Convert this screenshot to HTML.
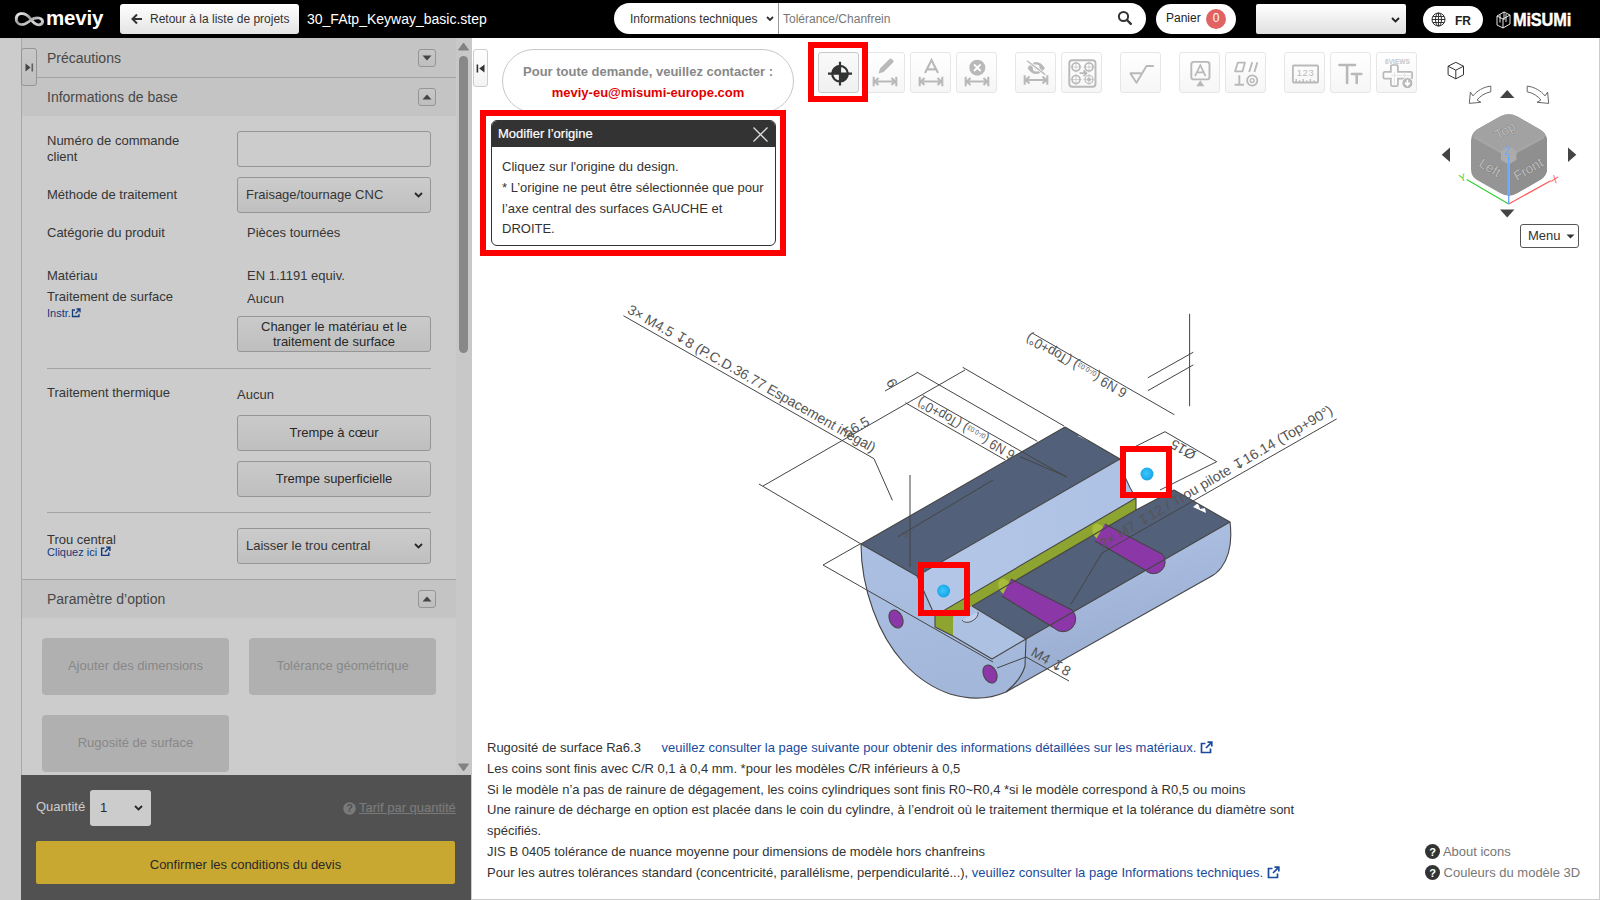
<!DOCTYPE html>
<html><head><meta charset="utf-8">
<style>
*{box-sizing:border-box;margin:0;padding:0}
html,body{width:1600px;height:900px;overflow:hidden;background:#fff;font-family:"Liberation Sans",sans-serif;color:#333}
.a{position:absolute}
#hdr{left:0;top:0;width:1600px;height:38px;background:#000}
.btn-back{left:120px;top:4px;width:179px;height:30px;border-radius:3px;background:linear-gradient(#fff,#e4e4e4);font-size:12px;color:#333}
.pill{background:#fff;border-radius:16px}
/* left panel */
#lp{left:0;top:38px;width:472px;height:862px;background:#fff;overflow:hidden}
.sec{left:21px;width:435px;background:#f5f5f5;border-bottom:1px solid #ccc}
.sec .t{left:26px;font-size:14px;color:#5a5a5a}
.tg{width:18px;height:18px;border:1px solid #bbb;border-radius:3px;background:linear-gradient(#fafafa,#eee)}
.lbl{left:47px;font-size:13px;color:#444;line-height:16px}
.val{font-size:13px;color:#444}
.inp{left:237px;width:194px;border:1px solid #bbb;border-radius:3px;background:#fff}
.sel{left:237px;width:194px;border:1px solid #bbb;border-radius:3px;background:linear-gradient(#fff,#f0f0f0);font-size:13px;color:#444}
.gbtn{left:237px;width:194px;border:1px solid #bbb;border-radius:3px;background:linear-gradient(#fdfdfd,#efefef);font-size:13px;color:#333;text-align:center}
.obtn{width:187px;height:57px;border-radius:4px;background:#ddd;color:#aaa;font-size:13px;text-align:center;line-height:55px}
.hr{left:47px;width:384px;height:1px;background:#ccc}
#ov{left:0;top:38px;width:472px;height:862px;background:rgba(0,0,0,.2)}
.tb{width:41px;height:41px;border:1px solid #e6e6e6;border-radius:3px;background:linear-gradient(#fff,#f6f6f6)}
.tb svg{position:absolute;left:0;top:0}
.info{left:487px;font-size:13px;color:#333;line-height:20.8px;white-space:nowrap}
.lnk{color:#1a4a9c}
.rbox{border:6px solid #f00}
</style></head><body>
<!-- HEADER -->
<div id="hdr" class="a">
  <svg class="a" style="left:0;top:0" width="50" height="38" viewBox="0 0 50 38">
    <defs><linearGradient id="lg1" x1="0" y1="0" x2="1" y2="1"><stop offset="0" stop-color="#f2f2f2"/><stop offset=".45" stop-color="#9a9a9a"/><stop offset=".7" stop-color="#d8d8d8"/><stop offset="1" stop-color="#bdbdbd"/></linearGradient></defs>
    <path transform="translate(29.4 19.2) scale(0.93 0.86) translate(-29.2 -19.2)" d="M29.5 17.5C26.5 13.5 22.5 12.2 19.5 12.8C15.5 13.6 14.5 17.5 15.3 21C16.2 24.5 19.5 25.8 22.5 25.2C25.5 24.6 28 22.5 31 20C33.5 18 36.5 17.3 39.5 17.8C42.5 18.5 43.8 20.8 43.2 23C42.6 25.2 40.2 26 37.8 25.6C35 25 32.5 22 29.5 17.5Z" fill="none" stroke="url(#lg1)" stroke-width="3.2"/>
  </svg>
  <div class="a" style="left:46px;top:6px;font-size:20.5px;font-weight:bold;color:#fff;letter-spacing:-0.2px">meviy</div>
  <div class="a btn-back">
    <svg class="a" style="left:11px;top:9px" width="12" height="12" viewBox="0 0 12 12"><path d="M11 6H2M6 1.5L1.5 6 6 10.5" stroke="#333" stroke-width="2" fill="none"/></svg>
    <div class="a" style="left:30px;top:8px">Retour à la liste de projets</div>
  </div>
  <div class="a" style="left:307px;top:11px;font-size:14px;color:#fff">30_FAtp_Keyway_basic.step</div>
  <div class="a pill" style="left:614px;top:3px;width:532px;height:31px">
    <div class="a" style="left:16px;top:9px;font-size:12px;color:#333">Informations techniques</div>
    <svg class="a" style="left:152px;top:13px" width="8" height="6" viewBox="0 0 8 6"><path d="M1 1l3 3 3-3" stroke="#333" stroke-width="1.8" fill="none"/></svg>
    <div class="a" style="left:164px;top:0;width:1px;height:31px;background:#999"></div>
    <div class="a" style="left:169px;top:9px;font-size:12px;color:#777">Tolérance/Chanfrein</div>
    <svg class="a" style="left:503px;top:7px" width="16" height="16" viewBox="0 0 16 16"><circle cx="6.5" cy="6.5" r="4.6" stroke="#333" stroke-width="2" fill="none"/><path d="M10 10l3.8 3.8" stroke="#333" stroke-width="2.4" stroke-linecap="round"/></svg>
  </div>
  <div class="a pill" style="left:1156px;top:4px;width:80px;height:30px;border-radius:15px">
    <div class="a" style="left:10px;top:7px;font-size:12px;color:#222">Panier</div>
    <div class="a" style="left:50px;top:4.5px;width:20px;height:20px;border-radius:50%;background:#e06262;color:#fff;font-size:12px;text-align:center;line-height:19px">0</div>
  </div>
  <div class="a" style="left:1256px;top:4px;width:150px;height:30px;border-radius:2px;background:linear-gradient(#fff,#e0e0e0)">
    <svg class="a" style="left:135px;top:13px" width="9" height="6" viewBox="0 0 9 6"><path d="M1 1l3.5 3.5L8 1" stroke="#222" stroke-width="1.8" fill="none"/></svg>
  </div>
  <div class="a pill" style="left:1423px;top:6px;width:60px;height:27px;border-radius:14px">
    <svg class="a" style="left:8px;top:6px" width="15" height="15" viewBox="0 0 15 15"><g stroke="#333" stroke-width="1" fill="none"><circle cx="7.5" cy="7.5" r="6.5"/><ellipse cx="7.5" cy="7.5" rx="3" ry="6.5"/><path d="M7.5 1v13M1 7.5h13M2 4.5h11M2 10.5h11"/></g></svg>
    <div class="a" style="left:32px;top:8px;font-size:12px;font-weight:bold;color:#222">FR</div>
  </div>
  <svg class="a" style="left:1496px;top:10px" width="16" height="19" viewBox="0 0 16 19"><g stroke="#fff" stroke-width="0.9" fill="none"><path d="M1 6l6 3v9l-6-3z M7 9l7-4v9l-7 4 M1 6l7-4 6 3 M8 2v8 M10 4l0 8 M4 4.5l0 8"/></g></svg>
  <div class="a" style="left:1513px;top:10px;font-size:18px;font-weight:bold;color:#fff;transform:scaleX(0.91);transform-origin:0 0;letter-spacing:-0.2px;-webkit-text-stroke:0.4px #fff">MiSUMi</div>
</div>


<!-- MAIN -->
<div class="a" style="left:1599px;top:38px;width:1px;height:862px;background:#ccc"></div>
<div class="a" style="left:472px;top:899px;width:1128px;height:1px;background:#ccc"></div>
<div class="a" style="left:473px;top:49px;width:15px;height:38px;border:1px solid #ccc;border-radius:3px;background:linear-gradient(#fff,#f3f3f3)">
  <svg class="a" style="left:2px;top:14px" width="9" height="9" viewBox="0 0 9 9"><rect x="0.6" y="0.5" width="1.6" height="8" fill="#333"/><path d="M8.5 0.5L3.2 4.5L8.5 8.5Z" fill="#333"/></svg>
</div>
<div class="a" style="left:502px;top:49px;width:292px;height:64px;border:1px solid #c8c8c8;border-radius:32px;background:#fff">
  <div class="a" style="left:0;top:14px;width:290px;text-align:center;font-size:13px;font-weight:bold;color:#888">Pour toute demande, veuillez contacter :</div>
  <div class="a" style="left:0;top:35px;width:290px;text-align:center;font-size:13px;font-weight:bold;color:#e00000">meviy-eu@misumi-europe.com</div>
</div>
<div class="a tb" style="left:818px;top:52px;border-color:#c8c8c8;background:linear-gradient(#fafafa,#f0f0f0)"><svg width="41" height="41" viewBox="0 0 41 41"><circle cx="21" cy="20.7" r="7.8" stroke="#333" stroke-width="2.2" fill="none"/><path d="M21 20.7V12.9A7.8 7.8 0 0 0 13.2 20.7z M21 20.7V28.5A7.8 7.8 0 0 0 28.8 20.7z" fill="#333"/><path d="M21 8.8v23.8M9 20.7h24" stroke="#333" stroke-width="2.2"/></svg></div>
<div class="a tb" style="left:864px;top:52px"><svg width="41" height="41" viewBox="0 0 41 41"><path d="M13.6 20.5l1.4-5 9.5-9.5a1.6 1.6 0 0 1 2.3 0l1.3 1.3a1.6 1.6 0 0 1 0 2.3L18.6 19z" fill="#b9b9b9"/><path d="M8.7 23.8v9.5M31.3 23.8v9.5M9.5 28.55h21M13.5 25.05l-3.6 3.5 3.6 3.5M26.5 25.05l3.6 3.5-3.6 3.5" stroke="#b9b9b9" stroke-width="2.1" fill="none"/></svg></div>
<div class="a tb" style="left:910px;top:52px"><svg width="41" height="41" viewBox="0 0 41 41"><path d="M14 20L20.5 7 27 20M16 16.4h9" stroke="#b9b9b9" stroke-width="2.1" fill="none"/><path d="M8.7 23.8v9.5M31.3 23.8v9.5M9.5 28.55h21M13.5 25.05l-3.6 3.5 3.6 3.5M26.5 25.05l3.6 3.5-3.6 3.5" stroke="#b9b9b9" stroke-width="2.1" fill="none"/></svg></div>
<div class="a tb" style="left:956px;top:52px"><svg width="41" height="41" viewBox="0 0 41 41"><circle cx="20.3" cy="14.7" r="8" fill="#b9b9b9"/><path d="M17 11.4l6.6 6.6M23.6 11.4L17 18" stroke="#fff" stroke-width="1.8"/><path d="M8.7 23.8v9.5M31.3 23.8v9.5M9.5 28.55h21M13.5 25.05l-3.6 3.5 3.6 3.5M26.5 25.05l3.6 3.5-3.6 3.5" stroke="#b9b9b9" stroke-width="2.1" fill="none"/></svg></div>
<div class="a tb" style="left:1015px;top:52px"><svg width="41" height="41" viewBox="0 0 41 41"><path d="M11.5 15c2.5-4 5.5-6 8.7-6s6.2 2 8.7 6c-2.5 4-5.5 6-8.7 6s-6.2-2-8.7-6z" fill="#b9b9b9"/><circle cx="20.2" cy="15" r="3.4" fill="#fff"/><circle cx="20.2" cy="15" r="1.8" fill="#b9b9b9"/><path d="M11 7.7L29.3 21.6" stroke="#fff" stroke-width="3"/><path d="M11 7.7L29.3 21.6" stroke="#b9b9b9" stroke-width="1.4"/><path d="M8.7 22.3v9.5M31.3 22.3v9.5M9.5 27.05h21M13.5 23.55l-3.6 3.5 3.6 3.5M26.5 23.55l3.6 3.5-3.6 3.5" stroke="#b9b9b9" stroke-width="2.1" fill="none"/></svg></div>
<div class="a tb" style="left:1061px;top:52px"><svg width="41" height="41" viewBox="0 0 41 41"><rect x="7.3" y="7.2" width="26.2" height="26.5" rx="3" stroke="#b9b9b9" stroke-width="1.9" fill="none"/><g stroke="#b9b9b9" fill="none"><circle cx="14" cy="14" r="4" stroke-width="1.7"/><circle cx="27" cy="14" r="4" stroke-width="1.7"/><circle cx="14" cy="26.5" r="4" stroke-width="1.7"/><circle cx="27" cy="26.5" r="4" stroke-width="1.2"/><circle cx="27" cy="26.5" r="1.6" fill="#b9b9b9" stroke-width="0.8"/><path d="M14 8.5v11M8.5 14h11M27 8.5v11M21.5 14h11M14 21v11M8.5 26.5h11M27 21v11M21.5 26.5h11" stroke-width="0.6"/><path d="M17.5 20.2h6.5M21.5 17.3l3 2.9-3 2.9" stroke-width="1.8"/></g></svg></div>
<div class="a tb" style="left:1120px;top:52px"><svg width="41" height="41" viewBox="0 0 41 41"><path d="M8.7 20.2h11.6M9.3 20.4l6.2 9.3 10-16.7h7.3" stroke="#b9b9b9" stroke-width="1.9" fill="none" stroke-linejoin="round"/></svg></div>
<div class="a tb" style="left:1179px;top:52px"><svg width="41" height="41" viewBox="0 0 41 41"><rect x="11.3" y="8.9" width="18.2" height="17.5" rx="2.5" stroke="#b9b9b9" stroke-width="1.9" fill="none"/><path d="M15 23.2l5.3-11 5.3 11M16.8 19.4h7" stroke="#b9b9b9" stroke-width="1.7" fill="none"/><path d="M20.3 27.3l-4 6h8z" fill="#b9b9b9"/></svg></div>
<div class="a tb" style="left:1225px;top:52px"><svg width="41" height="41" viewBox="0 0 41 41"><path d="M11.8 9.6h7.1l-2.4 8.7H9.1z" stroke="#b9b9b9" stroke-width="1.8" fill="none" stroke-linejoin="round"/><path d="M26.2 9.2l-3 9.8M31.4 9.2l-3 9.8M13.3 22.3v9.4M8.6 31.7h9.4" stroke="#b9b9b9" stroke-width="1.9" fill="none"/><circle cx="26.2" cy="27.5" r="5.1" stroke="#b9b9b9" stroke-width="1.8" fill="none"/><circle cx="26.2" cy="27.5" r="1.9" stroke="#b9b9b9" stroke-width="1.4" fill="none"/></svg></div>
<div class="a tb" style="left:1284px;top:52px"><svg width="41" height="41" viewBox="0 0 41 41"><rect x="7.9" y="12.5" width="25.2" height="17" rx="1" stroke="#b9b9b9" stroke-width="1.8" fill="none"/><text x="20.5" y="22.8" font-size="9.5" text-anchor="middle" fill="#b9b9b9" font-family="Liberation Sans" letter-spacing="0.6">123</text><path d="M11.2 29.5v-3.5M14.6 29.5v-2.2M18.2 29.5v-3.5M21.8 29.5v-2.2M25.4 29.5v-3.5M29 29.5v-2.2" stroke="#b9b9b9" stroke-width="1.3"/></svg></div>
<div class="a tb" style="left:1330px;top:52px"><svg width="41" height="41" viewBox="0 0 41 41"><path d="M8.5 12h15.5M16.1 12v18M20.8 21h9.5M25.7 21v9" stroke="#b9b9b9" stroke-width="2.6" stroke-linecap="round" fill="none"/></svg></div>
<div class="a tb" style="left:1376px;top:52px"><svg width="41" height="41" viewBox="0 0 41 41"><text x="20.5" y="10.6" font-size="6.6" font-weight="bold" text-anchor="middle" fill="#c8c8c8" font-family="Liberation Sans">6VIEWS</text><path d="M13.9 13.3a1.3 1.3 0 0 1 1.3-1.3h4.4a1.3 1.3 0 0 1 1.3 1.3v5.6h12.9a1.3 1.3 0 0 1 1.3 1.3v4.2a1.3 1.3 0 0 1-1.3 1.3H20.9v6.1a1.3 1.3 0 0 1-1.3 1.3h-4.4a1.3 1.3 0 0 1-1.3-1.3v-6.1H7.7a1.3 1.3 0 0 1-1.3-1.3v-4.2a1.3 1.3 0 0 1 1.3-1.3h6.2z" stroke="#b9b9b9" stroke-width="1.7" fill="#fcfcfc"/><path d="M14 22.4h20.5M17.4 19v14M27.6 19v6.4" stroke="#ddd" stroke-width="0.7"/><circle cx="30.4" cy="30.1" r="5.6" fill="#b9b9b9" stroke="#fcfcfc" stroke-width="1"/><path d="M30.4 26.8v5.2M28 29.6l2.4 2.6 2.4-2.6" stroke="#fff" stroke-width="1.6" fill="none"/></svg></div>

<div class="a rbox" style="left:808px;top:42px;width:60px;height:60px"></div>


<!-- MODEL -->
<svg class="a" style="left:0;top:0" width="1600" height="900" viewBox="0 0 1600 900">
  <defs>
    <linearGradient id="cyl" x1="0" y1="0" x2="0.3" y2="1"><stop offset="0" stop-color="#b2c5e6"/><stop offset="1" stop-color="#97abd0"/></linearGradient>
    <linearGradient id="endf" x1="0" y1="0" x2="0.2" y2="1"><stop offset="0" stop-color="#abc0e3"/><stop offset="1" stop-color="#a3b7da"/></linearGradient>
    <linearGradient id="wallg" x1="0" y1="0" x2="1" y2="0"><stop offset="0" stop-color="#b4c7e8"/><stop offset="1" stop-color="#adc1e4"/></linearGradient>
    <radialGradient id="dot" cx="0.45" cy="0.45" r="0.6"><stop offset="0" stop-color="#3cc6ff"/><stop offset="1" stop-color="#14a2e2"/></radialGradient>
  </defs>
  <!-- end face (left) -->
  <path d="M861 544L917 576L935 616L953 636L992 659L1026 639L1025 666C1022 676 1016 684 1006 692C990 699 970 700 950 694C915 682 888 652 873 610C865 588 861 566 861 544Z" fill="url(#endf)"/>
  <!-- cylinder surface -->
  <path d="M1026 639L1230 522C1232 538 1230 556 1221 568C1218 572 1214 575 1210 577L1006 692C1016 684 1022 676 1025 666Z" fill="url(#cyl)"/>
  <!-- upper dark strip -->
  <path d="M861 544L1065 427L1120 459L917 576Z" fill="#536079"/>
  <!-- wall -->
  <path d="M917 576L1120 459C1122 470 1127 484 1136 498L935 616Z" fill="url(#wallg)"/>
  <path d="M953 617L972 606L1026 639L992 659L953 636Z" fill="#adc1e3"/>
  <!-- lower dark face -->
  <path d="M972 606L1136 510L1174 490L1230 522L1026 639Z" fill="#536079"/>
  <!-- olive -->
  <path d="M935 615.6L1136 498L1136 510L972 606L953 617L953 636L935 627Z" fill="#8ea430"/>
  <!-- purple cylinders -->
  <g transform="translate(-3 -2)">
  <ellipse cx="1008" cy="589" rx="6" ry="9" transform="rotate(-30 1008 589)" fill="#a8bc3c"/>
  <path d="M1014 581L1075 612A8 8 0 0 1 1057 630L1005 598Z" fill="#8b37a7"/>
  <path d="M1075 612A8 8 0 0 1 1057 630" stroke="#444" stroke-width="1" fill="none"/>
  </g>
  <g transform="translate(-4 -3)">
  <ellipse cx="1103" cy="535" rx="6" ry="9" transform="rotate(-30 1103 535)" fill="#a8bc3c"/>
  <path d="M1109 527L1166 557A7.5 7.5 0 0 1 1149 573L1099 544Z" fill="#8b37a7"/>
  <path d="M1166 557A7.5 7.5 0 0 1 1149 573" stroke="#444" stroke-width="1" fill="none"/>
  </g>
  <path d="M1193 507l5 -4 2 6 5 -1 1 5z M1078 436l5-4 2 6 5-1 1 5z" fill="#fff"/>
  <path d="M962 620A9 6 -30 0 0 978 612" stroke="#555" stroke-width="1" fill="#c0d0ec"/>
  <!-- small holes on end face -->
  <ellipse cx="896" cy="619" rx="6.5" ry="9.5" transform="rotate(-25 896 619)" fill="#8b37a7" stroke="#444" stroke-width="1"/>
  <ellipse cx="990" cy="674" rx="6.5" ry="9.5" transform="rotate(-25 990 674)" fill="#8b37a7" stroke="#444" stroke-width="1"/>
  <!-- model edges -->
  <g stroke="#454545" stroke-width="1.1" fill="none" stroke-linejoin="round">
    <path d="M861 544L1065 427L1120 459"/>
    <path d="M861 544C861 566 865 588 873 610C888 652 915 682 950 694C970 700 990 699 1006 692L1210 577C1214 575 1218 572 1221 568C1230 556 1232 538 1230 522"/>
    <path d="M861 544L917 576L1120 459"/>
    <path d="M935 615.6L1136 498M972 606L1136 510M953 636L935 627L935 615.6"/>
    <path d="M1026 639L1230 522L1174 490L1136 510"/>
    <path d="M1026 639L1025 666C1022 676 1016 684 1006 692"/>
    <path d="M917 576L935 616"/>
    <path d="M1120 459C1122 470 1127 484 1136 498L1136 510"/>
    <path d="M953 636L992 659L1026 639L972 606"/>
    <path d="M1011 579L1072 610M1002 596L1054 628M1105 524L1162 554M1095 541L1145 570"/>
  </g>
  <!-- dimension lines -->
  <g stroke="#454545" stroke-width="1" fill="none">
    <path d="M623.4 315.7L874 458.7L892.4 500.3"/>
    <path d="M763 486L965 370"/>
    <path d="M759 484L861 544"/>
    <path d="M962.7 367.3L1064 426"/>
    <path d="M916.7 372L1037.3 441.3"/>
    <path d="M922.7 395.3L1010.7 445.3"/>
    <path d="M905.3 402.7L1005.3 460"/>
    <path d="M1010 445L1067 477.3"/>
    <path d="M885 391L918 372.3"/>
    <path d="M898 536.7L993 480"/>
    <path d="M1020 456.7L1066.7 476.7"/>
    <path d="M1031.9 332.9L1174.3 414.7"/>
    <path d="M1189.6 313.8V406.2"/>
    <path d="M1147.8 377.8L1193.3 352.2M1147.8 390.7L1193.3 364.9"/>
    <path d="M1336.7 418.9L1102 553L1071 604.4"/>
    <path d="M1165 431.7L1216.7 461.7M1125 451.7L1165 431.7M1160 490L1216.7 461.7"/>
    <path d="M910 475V567"/>
    <path d="M823 565L993 662M823 565L860 544"/>
    <path d="M997 668L1026 657M1026 657L1069 681"/>
  </g>
  <g font-family="Liberation Sans" font-size="14" fill="#555">
    <text transform="translate(626.5 312.5) rotate(29.7)" textLength="283" lengthAdjust="spacingAndGlyphs">3× M4.5 ↧8 (P.C.D.36.77 Espacement inégal)</text>
    <text transform="translate(847 438) rotate(-30)">56.5</text>
    <text transform="translate(898 384) rotate(-120)">9</text>
    <text transform="translate(1128 390) rotate(210)" textLength="114" lengthAdjust="spacingAndGlyphs">6 N9 (<tspan font-size="7">0/-0.03</tspan>) (Top+0°)</text>
    <text transform="translate(1016 452) rotate(210)" textLength="110" lengthAdjust="spacingAndGlyphs">6 N9 (<tspan font-size="7">0/-0.03</tspan>) (Top+0°)</text>
    <text transform="translate(1103 549) rotate(-30.5)" textLength="268" lengthAdjust="spacingAndGlyphs">2× M7 ↧12 / Trou pilote ↧16.14 (Top+90°)</text>
    <text transform="translate(1197 452) rotate(210)">Ø15</text>
    <text transform="translate(1030 655) rotate(30)">M4 ↧8</text>
    <text transform="translate(906 538) rotate(-60)" font-size="9">3</text>
  </g>
  <!-- blue dots -->
  <circle cx="943.6" cy="591" r="6.5" fill="url(#dot)"/>
  <circle cx="1147" cy="474" r="6.5" fill="url(#dot)"/>
</svg>
<div class="a rbox" style="left:918px;top:562px;width:52px;height:54px"></div>
<div class="a rbox" style="left:1120px;top:446px;width:52px;height:52px"></div>
<!-- INFO TEXT -->
<div class="a info" style="top:738px">Rugosité de surface Ra6.3 <span style="display:inline-block;width:17px"></span><span class="lnk">veuillez consulter la page suivante pour obtenir des informations détaillées sur les matériaux. <svg width="13" height="13" viewBox="0 0 13 13" style="vertical-align:-2px"><path d="M5.5 2.5H1.5v9h9v-4M7.5 1.2h4.3v4.3M11.8 1.2L6 7" stroke="#1a4a9c" stroke-width="1.7" fill="none"/></svg></span><br>
Les coins sont finis avec C/R 0,1 à 0,4 mm. *pour les modèles C/R inférieurs à 0,5<br>
Si le modèle n’a pas de rainure de dégagement, les coins cylindriques sont finis R0~R0,4 *si le modèle correspond à R0,5 ou moins<br>
Une rainure de décharge en option est placée dans le coin du cylindre, à l’endroit où le traitement thermique et la tolérance du diamètre sont<br>
spécifiés.<br>
JIS B 0405 tolérance de nuance moyenne pour dimensions de modèle hors chanfreins<br>
Pour les autres tolérances standard (concentricité, parallélisme, perpendicularité...), <span class="lnk">veuillez consulter la page Informations techniques. <svg width="13" height="13" viewBox="0 0 13 13" style="vertical-align:-2px"><path d="M5.5 2.5H1.5v9h9v-4M7.5 1.2h4.3v4.3M11.8 1.2L6 7" stroke="#1a4a9c" stroke-width="1.7" fill="none"/></svg></span></div>
<div class="a" style="left:1425px;top:842px;font-size:13px;color:#777;line-height:20.8px;white-space:nowrap">
<svg width="15" height="15" viewBox="0 0 15 15" style="vertical-align:-3px"><circle cx="7.5" cy="7.5" r="7.5" fill="#333"/><text x="7.5" y="11.6" font-size="11" font-weight="bold" text-anchor="middle" fill="#fff" font-family="Liberation Sans">?</text></svg> About icons<br>
<svg width="15" height="15" viewBox="0 0 15 15" style="vertical-align:-3px"><circle cx="7.5" cy="7.5" r="7.5" fill="#333"/><text x="7.5" y="11.6" font-size="11" font-weight="bold" text-anchor="middle" fill="#fff" font-family="Liberation Sans">?</text></svg> Couleurs du modèle 3D</div>
<!-- VIEW CUBE -->
<svg class="a" style="left:1440px;top:58px" width="145" height="165" viewBox="1440 58 145 165">
  <g stroke="#333" stroke-width="1" fill="none" stroke-linejoin="round">
    <path d="M1455.8 62.3l7.7 3.9v8.6l-7.7 4-7.7-4v-8.6z M1448.1 66.2l7.7 4 7.7-4 M1455.8 70.2v8.6"/>
  </g>
  <g stroke="#666" stroke-width="1" fill="#fff" stroke-linejoin="round">
    <path d="M1490.8 86.1C1483 87 1477 91 1473 95.9L1470.4 92.1L1469.3 103.4L1480.9 102.3L1477.1 100C1480 96 1485 93 1490.8 91.75Z"/>
    <path transform="translate(3 0)" d="M1524.2 86.1C1532 87 1538 91 1542 95.9L1544.6 92.1L1545.7 103.4L1534.1 102.3L1537.9 100C1535 96 1530 93 1524.2 91.75Z"/>
  </g>
  <g fill="#444">
    <path d="M1500 98l7.2-8 7.2 8z"/>
    <path d="M1500 209.5h14.4l-7.2 8z"/>
    <path d="M1450 147.5v14.5l-8.3-7.2z"/>
    <path d="M1568 147.5v14.5l8.3-7.2z"/>
  </g>
  <path d="M1500 116.5Q1508.7 112 1517.4 116.5L1540 129.5Q1547 133.5 1547 141L1547 169Q1547 176 1540 180L1517.4 193Q1508.7 198 1500 193L1477 180Q1471 176.5 1471 169L1471 141Q1471 133.5 1477 129.5Z" fill="#959595"/>
  <path d="M1500 116.5Q1508.7 112 1517.4 116.5L1540 129.5Q1544.5 132 1546 136L1508.7 155.5L1472 136Q1473.5 132 1477 129.5Z" fill="#a2a2a2"/>
  <path d="M1508.7 155.5L1546 136Q1547 138.5 1547 141L1547 169Q1547 176 1540 180L1517.4 193Q1513 195.5 1508.7 195.7Z" fill="#8f8f8f"/>
  <path d="M1474 137L1508.7 156 1544 137M1508.7 156V196" stroke="#a6a6a6" stroke-width="2.5" fill="none"/>
  <path d="M1501 151l7.7-4.5 7.7 4.5v9l-7.7 4.5-7.7-4.5z" fill="#acacac"/>
  <g font-family="Liberation Sans" font-size="13.5" fill="#bdbdbd" stroke="#6e6e6e" stroke-width="0.5" paint-order="stroke">
    <text transform="translate(1498 140) rotate(-30)">Top</text>
    <text transform="translate(1478 166) rotate(30)">Left</text>
    <text transform="translate(1517 181) rotate(-30)">Front</text>
  </g>
  <path d="M1508.7 204L1466.7 179.5" stroke="#3c3" stroke-width="1.2"/>
  <path d="M1508.7 204L1550.7 180.7" stroke="#f55" stroke-width="1.2"/>
  <path d="M1508.7 204V156" stroke="#6af" stroke-width="1.4"/>
  <text x="1459" y="182" font-size="10" fill="#3c3" font-family="Liberation Sans" transform="rotate(-20 1460 178)">Y</text>
  <text x="1552" y="183" font-size="10" fill="#f55" font-family="Liberation Sans" transform="rotate(20 1556 178)">X</text>
  <text x="1504" y="155" font-size="10" fill="#6af" font-family="Liberation Sans">Z</text>
</svg>
<div class="a" style="left:1520px;top:224px;width:59px;height:24px;border:1px solid #555;border-radius:3px;background:#fff;font-size:13px;color:#333">
  <div class="a" style="left:7px;top:3px">Menu</div>
  <svg class="a" style="left:45px;top:9px" width="9" height="5" viewBox="0 0 9 5"><path d="M0.5 0.5h8L4.5 4.5z" fill="#333"/></svg>
</div>
<!-- MODAL -->
<div class="a rbox" style="left:480px;top:110px;width:306px;height:146px"></div>
<div class="a" style="left:491px;top:120px;width:285px;height:126px;border:1px solid #333;border-radius:6px;background:#fff;overflow:hidden">
  <div class="a" style="left:0;top:0;width:283px;height:26px;background:#333"></div>
  <div class="a" style="left:6px;top:5px;font-size:13px;color:#fff;-webkit-text-stroke:0.2px #fff">Modifier l’origine</div>
  <svg class="a" style="left:260px;top:5px" width="17" height="17" viewBox="0 0 17 17"><path d="M1.5 1.5l14 14M15.5 1.5l-14 14" stroke="#ddd" stroke-width="1.3"/></svg>
  <div class="a" style="left:10px;top:36px;font-size:13px;color:#333;line-height:20.8px;white-space:nowrap">Cliquez sur l'origine du design.<br>* L’origine ne peut être sélectionnée que pour<br>l’axe central des surfaces GAUCHE et<br>DROITE.</div>
</div>
<!-- LEFT PANEL -->
<div id="lp" class="a">
  <div class="a sec" style="top:0;height:40px"><div class="a t" style="top:12px">Précautions</div>
    <div class="a tg" style="left:397px;top:11px"><svg class="a" style="left:3px;top:5px" width="10" height="6" viewBox="0 0 10 6"><path d="M0.5 0.5h9L5 5.5z" fill="#555"/></svg></div></div>
  <div class="a sec" style="top:40px;height:38px;border-bottom:none"><div class="a t" style="top:11px">Informations de base</div>
    <div class="a tg" style="left:397px;top:10px"><svg class="a" style="left:3px;top:5px" width="10" height="6" viewBox="0 0 10 6"><path d="M0.5 5.5h9L5 0.5z" fill="#555"/></svg></div></div>

  <div class="a lbl" style="top:95px">Numéro de commande<br>client</div>
  <div class="a inp" style="top:93px;height:36px"></div>
  <div class="a lbl" style="top:149px">Méthode de traitement</div>
  <div class="a sel" style="top:139px;height:36px"><div class="a" style="left:8px;top:9px">Fraisage/tournage CNC</div>
    <svg class="a" style="left:176px;top:14px" width="9" height="6" viewBox="0 0 9 6"><path d="M1 1l3.5 3.5L8 1" stroke="#333" stroke-width="1.8" fill="none"/></svg></div>
  <div class="a lbl" style="top:187px">Catégorie du produit</div>
  <div class="a val" style="left:247px;top:187px">Pièces tournées</div>
  <div class="a lbl" style="top:230px">Matériau</div>
  <div class="a val" style="left:247px;top:230px">EN 1.1191 equiv.</div>
  <div class="a lbl" style="top:251px">Traitement de surface</div>
  <div class="a val" style="left:247px;top:253px">Aucun</div>
  <div class="a" style="left:47px;top:269px;font-size:11px;color:#1a4a9c">Instr.<svg width="10" height="10" viewBox="0 0 10 10" style="vertical-align:-1px"><path d="M4 2H1.5v6.5H8V6M5.5 1H9v3.5M9 1L4.5 5.5" stroke="#1a4a9c" stroke-width="1.3" fill="none"/></svg></div>
  <div class="a gbtn" style="top:278px;height:36px;line-height:15px;padding-top:2px">Changer le matériau et le<br>traitement de surface</div>
  <div class="a hr" style="top:330px"></div>
  <div class="a lbl" style="top:347px">Traitement thermique</div>
  <div class="a val" style="left:237px;top:349px">Aucun</div>
  <div class="a gbtn" style="top:377px;height:36px;line-height:34px">Trempe à cœur</div>
  <div class="a gbtn" style="top:423px;height:36px;line-height:34px">Trempe superficielle</div>
  <div class="a hr" style="top:474px"></div>
  <div class="a lbl" style="top:494px">Trou central</div>
  <div class="a" style="left:47px;top:508px;font-size:11px;color:#1a4a9c">Cliquez ici <svg width="11" height="11" viewBox="0 0 10 10" style="vertical-align:-1px"><path d="M4 2H1.5v6.5H8V6M5.5 1H9v3.5M9 1L4.5 5.5" stroke="#1a4a9c" stroke-width="1.3" fill="none"/></svg></div>
  <div class="a sel" style="top:490px;height:36px"><div class="a" style="left:8px;top:9px">Laisser le trou central</div>
    <svg class="a" style="left:176px;top:14px" width="9" height="6" viewBox="0 0 9 6"><path d="M1 1l3.5 3.5L8 1" stroke="#333" stroke-width="1.8" fill="none"/></svg></div>
  <div class="a sec" style="top:541px;height:39px;border-top:1px solid #ccc;border-bottom:none"><div class="a t" style="top:11px">Paramètre d’option</div>
    <div class="a tg" style="left:397px;top:10px"><svg class="a" style="left:3px;top:5px" width="10" height="6" viewBox="0 0 10 6"><path d="M0.5 5.5h9L5 0.5z" fill="#555"/></svg></div></div>
  <div class="a obtn" style="left:42px;top:600px">Ajouter des dimensions</div>
  <div class="a obtn" style="left:249px;top:600px">Tolérance géométrique</div>
  <div class="a obtn" style="left:42px;top:677px">Rugosité de surface</div>
  <div class="a" style="left:21px;top:0;width:1px;height:737px;background:#d2d2d2"></div>
  <div class="a" style="left:21px;top:10px;width:16px;height:38px;border:1px solid #bbb;border-radius:3px;background:linear-gradient(#fafafa,#f0f0f0)">
    <svg class="a" style="left:3px;top:14px" width="9" height="9" viewBox="0 0 9 9"><path d="M0.5 0.5L5.5 4.5L0.5 8.5Z" fill="#555"/><rect x="6.5" y="0.5" width="1.6" height="8" fill="#777"/></svg>
  </div>
  <!-- scrollbar -->
  <div class="a" style="left:456px;top:0;width:16px;height:737px;background:#fbfbfb"></div>
  <svg class="a" style="left:458px;top:4px" width="11" height="9" viewBox="0 0 11 9"><path d="M5.5 1L10.5 8H0.5z" fill="#a3a3a3" stroke="#a3a3a3" stroke-width="1" stroke-linejoin="round"/></svg>
  <div class="a" style="left:459px;top:18px;width:9px;height:297px;border-radius:4.5px;background:#aaa"></div>
  <svg class="a" style="left:458px;top:725px" width="11" height="9" viewBox="0 0 11 9"><path d="M5.5 8L10.5 1H0.5z" fill="#a3a3a3" stroke="#a3a3a3" stroke-width="1" stroke-linejoin="round"/></svg>
  <!-- footer -->
  <div class="a" style="left:21px;top:737px;width:450px;height:125px;background:#666">
    <div class="a" style="left:15px;top:24px;font-size:13px;color:#fff">Quantité</div>
    <div class="a" style="left:69px;top:15px;width:61px;height:36px;border-radius:3px;background:#fff">
      <div class="a" style="left:10px;top:10px;font-size:13px;color:#333">1</div>
      <svg class="a" style="left:44px;top:15px" width="9" height="6" viewBox="0 0 9 6"><path d="M1 1l3.5 3.5L8 1" stroke="#333" stroke-width="1.8" fill="none"/></svg>
    </div>
    <svg class="a" style="left:322px;top:27px" width="13" height="13" viewBox="0 0 13 13"><circle cx="6.5" cy="6.5" r="6.2" fill="#999"/><text x="6.5" y="10.4" font-size="11" font-weight="bold" text-anchor="middle" fill="#666" font-family="Liberation Sans">?</text></svg>
    <div class="a" style="left:338px;top:25px;font-size:13px;color:#999;text-decoration:underline;-webkit-text-stroke:0.2px #999">Tarif par quantité</div>
    <div class="a" style="left:15px;top:66px;width:419px;height:43px;border-radius:2px;background:#fad23e;font-size:13px;color:#333;text-align:center;line-height:47px">Confirmer les conditions du devis</div>
  </div>
</div>
<div id="ov" class="a"></div>
</body></html>
